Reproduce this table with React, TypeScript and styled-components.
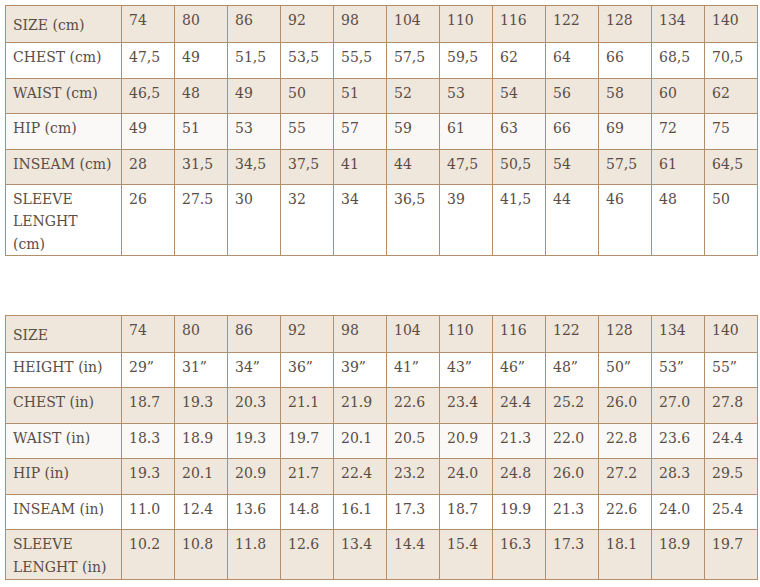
import React from 'react';
import styled, { createGlobalStyle } from 'styled-components';

const GlobalStyle = createGlobalStyle`
  html, body {
    margin: 0;
    padding: 0;
    background: #ffffff;
  }
`;

const Page = styled.div`
  padding: 5px 0 0 5px;
  display: flex;
  flex-direction: column;
  gap: 59px;
`;

const Table = styled.table`
  border-collapse: collapse;
  table-layout: fixed;
  width: 752px;
  color: #5a4d46;
  font-family: 'DejaVu Serif', 'Liberation Serif', serif;
  font-size: 14px;
  line-height: 22.3px;
`;

const Row = styled.tr<{ $shade: 'beige' | 'white' | 'soft' }>`
  background: ${(p) =>
    p.$shade === 'beige' ? '#efe6dc' : p.$shade === 'soft' ? '#fbf9f7' : '#ffffff'};
`;

const Cell = styled.td<{ $middle?: boolean; $h?: number }>`
  border: 1px solid #b28e6b;
  padding: 3px 3px 0 7px;
  vertical-align: ${(p) => (p.$middle ? 'middle' : 'top')};
  height: ${(p) => (p.$h ? `${p.$h}px` : 'auto')};
  box-sizing: border-box;
  white-space: pre-line;
`;

type SizeRow = { label: string; values: string[]; height?: number };

const sizes = ['74', '80', '86', '92', '98', '104', '110', '116', '122', '128', '134', '140'];

const cmRows: SizeRow[] = [
  { label: 'CHEST (cm)', values: ['47,5', '49', '51,5', '53,5', '55,5', '57,5', '59,5', '62', '64', '66', '68,5', '70,5'] },
  { label: 'WAIST (cm)', values: ['46,5', '48', '49', '50', '51', '52', '53', '54', '56', '58', '60', '62'] },
  { label: 'HIP (cm)', values: ['49', '51', '53', '55', '57', '59', '61', '63', '66', '69', '72', '75'] },
  { label: 'INSEAM (cm)', values: ['28', '31,5', '34,5', '37,5', '41', '44', '47,5', '50,5', '54', '57,5', '61', '64,5'] },
  { label: 'SLEEVE\nLENGHT\n(cm)', values: ['26', '27.5', '30', '32', '34', '36,5', '39', '41,5', '44', '46', '48', '50'], height: 70 },
];

const inRows: SizeRow[] = [
  { label: 'HEIGHT (in)', values: ['29”', '31”', '34”', '36”', '39”', '41”', '43”', '46”', '48”', '50”', '53”', '55”'] },
  { label: 'CHEST (in)', values: ['18.7', '19.3', '20.3', '21.1', '21.9', '22.6', '23.4', '24.4', '25.2', '26.0', '27.0', '27.8'] },
  { label: 'WAIST (in)', values: ['18.3', '18.9', '19.3', '19.7', '20.1', '20.5', '20.9', '21.3', '22.0', '22.8', '23.6', '24.4'] },
  { label: 'HIP (in)', values: ['19.3', '20.1', '20.9', '21.7', '22.4', '23.2', '24.0', '24.8', '26.0', '27.2', '28.3', '29.5'] },
  { label: 'INSEAM (in)', values: ['11.0', '12.4', '13.6', '14.8', '16.1', '17.3', '18.7', '19.9', '21.3', '22.6', '24.0', '25.4'] },
  { label: 'SLEEVE\nLENGHT (in)', values: ['10.2', '10.8', '11.8', '12.6', '13.4', '14.4', '15.4', '16.3', '17.3', '18.1', '18.9', '19.7'], height: 50 },
];

// rows 1,3,5 are beige; row 4 gets a faint warm tint, the rest stay white
function shadeFor(i: number): 'beige' | 'white' | 'soft' {
  if (i % 2 === 0) return 'beige';
  return i === 3 ? 'soft' : 'white';
}

function SizeTable({ title, rows }: { title: string; rows: SizeRow[] }) {
  return (
    <Table>
      <colgroup>
        <col style={{ width: '116px' }} />
        {sizes.map((s) => (
          <col key={s} style={{ width: '53px' }} />
        ))}
      </colgroup>
      <tbody>
        <Row $shade="beige">
          <Cell $middle $h={37}>
            {title}
          </Cell>
          {sizes.map((s) => (
            <Cell key={s}>{s}</Cell>
          ))}
        </Row>
        {rows.map((row, i) => (
          <Row key={row.label} $shade={shadeFor(i + 1)}>
            <Cell $h={row.height ?? 35.5}>{row.label}</Cell>
            {row.values.map((v, j) => (
              <Cell key={j}>{v}</Cell>
            ))}
          </Row>
        ))}
      </tbody>
    </Table>
  );
}

export default function App() {
  return (
    <>
      <GlobalStyle />
      <Page>
        <SizeTable title="SIZE (cm)" rows={cmRows} />
        <SizeTable title="SIZE" rows={inRows} />
      </Page>
    </>
  );
}
